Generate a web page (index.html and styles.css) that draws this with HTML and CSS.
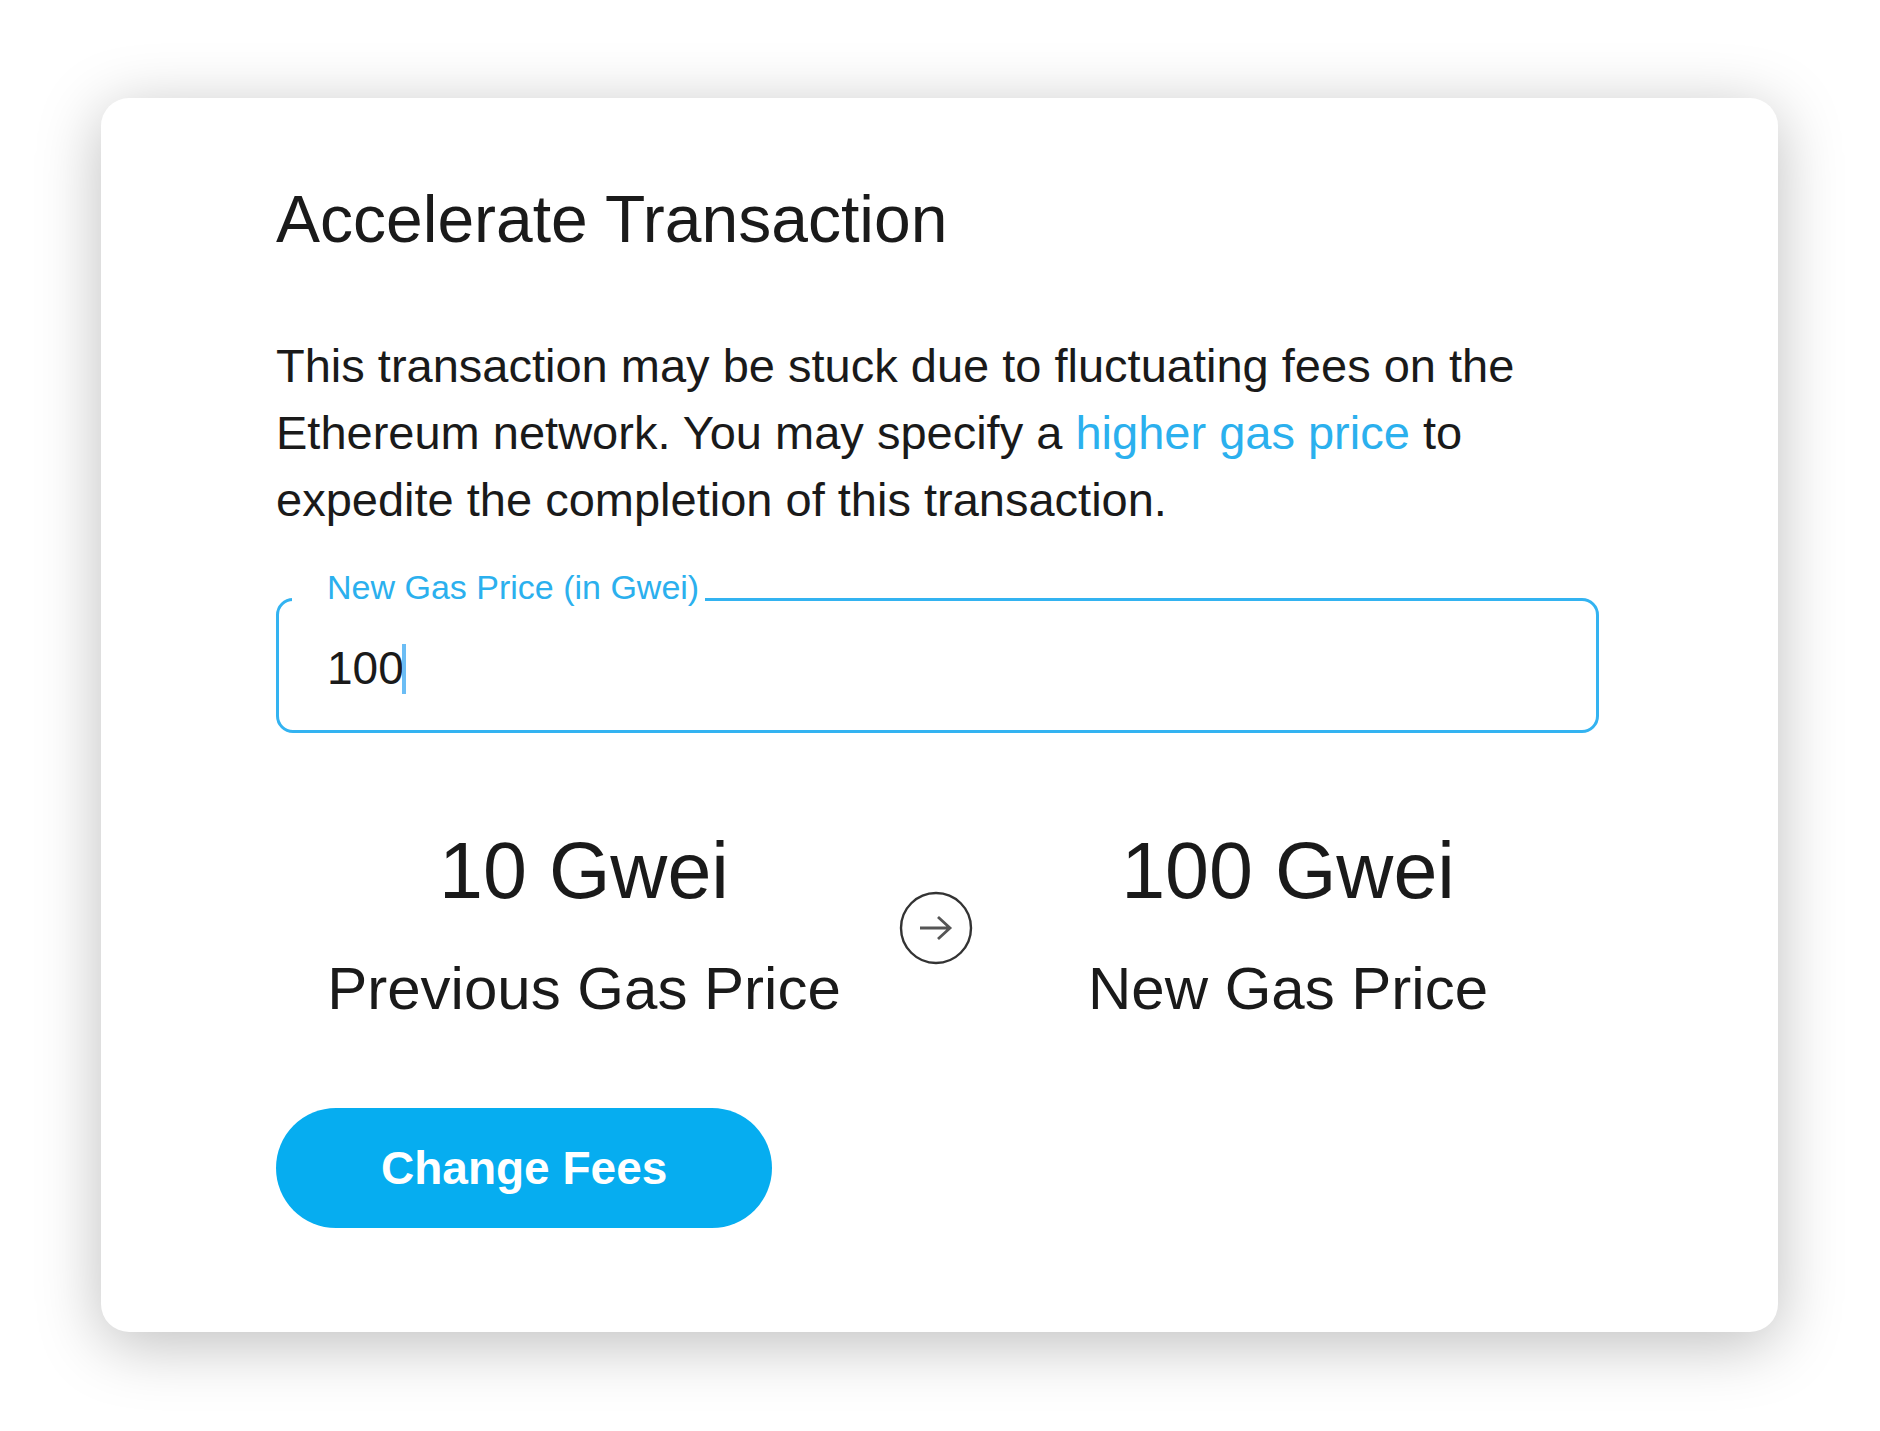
FILE: index.html
```
<!DOCTYPE html>
<html lang="en">
<head>
    <meta charset="UTF-8">
    <title>Accelerate Transaction</title>
    <meta name="viewport" content="width=device-width, initial-scale=1.0">
    <link rel="stylesheet" href="styles.css">
</head>
<body>
    <main class="card">
        <h1>Accelerate Transaction</h1>
        <p class="intro">This transaction may be stuck due to fluctuating fees on the Ethereum network. You may specify a <a href="#">higher gas price</a> to expedite the completion of this transaction.</p>
        <form>
            <fieldset class="field">
                <legend><label for="gasPrice">New Gas Price (in Gwei)</label></legend>
                <input type="text" id="gasPrice" name="gasPrice" inputmode="numeric" value="100">
                <span class="caret"></span>
            </fieldset>

            <div class="compare">
                <div class="price">
                    <div class="value">10 Gwei</div>
                    <div class="caption">Previous Gas Price</div>
                </div>
                <svg class="arrow" viewBox="0 0 74 74" fill="none" stroke="#333">
                    <circle cx="37" cy="37" r="35" stroke-width="2.4"/>
                    <path d="M21 37h30M39 26l12 11-12 11" stroke="#555" stroke-width="2.8"/>
                </svg>
                <div class="price">
                    <div class="value">100 Gwei</div>
                    <div class="caption">New Gas Price</div>
                </div>
            </div>

            <button type="submit">Change Fees</button>
        </form>
    </main>
</body>
</html>
```

FILE: styles.css
```
* { box-sizing: border-box; }
body { font-family: "Liberation Sans", Arial, sans-serif; background: #fff; color: #1a1a1a; margin: 0; padding: 98px 102px 99px 101px; }
.card { background: #fff; border-radius: 28px; padding: 83px 179px 104px 175px; box-shadow: 0 12px 64px rgba(0, 0, 0, 0.26); }
h1 { margin: 0 0 75px; font-size: 66px; font-weight: normal; line-height: 76px; }
.intro { margin: 0; font-size: 47px; line-height: 67px; }
a { color: #2bb0ee; text-decoration: none; }

/* outlined text field, the label sits in the border notch */
.field { position: relative; margin: 35px 0 0; padding: 0 0 24px 48px; border: 3px solid #33b3f1; border-radius: 17px; min-width: 0; }
.field legend { margin-left: -35px; padding: 0 6px 24px 35px; font-size: 34px; line-height: 38px; color: #2bb0ee; }
.field input { display: block; width: 100%; height: 76px; padding: 0; border: none; outline: none; background: transparent; font: inherit; font-size: 46px; color: inherit; }
.caret { position: absolute; left: 123px; bottom: 36px; width: 4px; height: 50px; background: #6bbdf5; }

.compare { display: grid; grid-template-columns: 1fr auto 1fr; align-items: center; margin-top: 92px; padding-right: 3px; text-align: center; }
.value { font-size: 79px; line-height: 92px; }
.caption { margin-top: 30px; font-size: 60px; line-height: 84px; }
.arrow { display: block; width: 74px; height: 74px; margin: 0 7px; }

button { display: block; margin-top: 77px; height: 120px; padding: 0 105px; background: #06adf0; color: #fff; border: none; border-radius: 60px; font-family: inherit; font-size: 46px; font-weight: bold; cursor: pointer; }
button:hover { background: #0599d6; }
```
